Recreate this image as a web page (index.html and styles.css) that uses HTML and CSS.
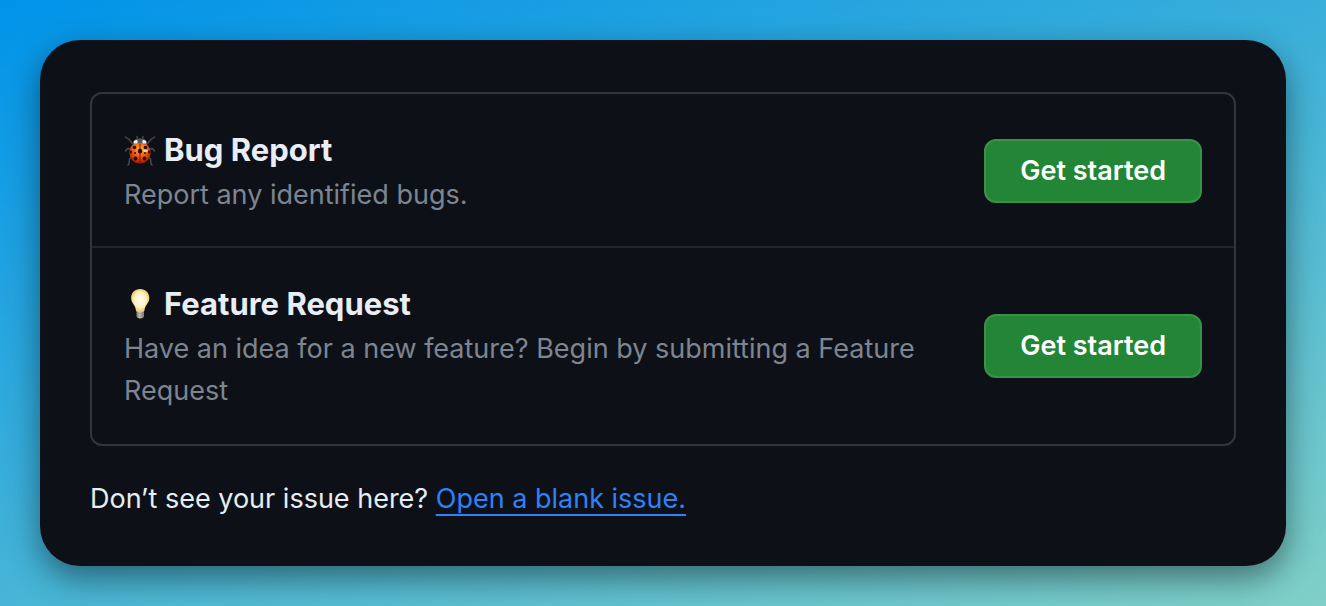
FILE: index.html
```html
<!DOCTYPE html>
<html lang="en">
<head>
<meta charset="utf-8">
<meta name="viewport" content="width=device-width, initial-scale=1">
<title>New issue</title>
<link rel="stylesheet" href="styles.css">
</head>
<body>
<main class="panel">
  <ul class="templates">
    <li class="template">
      <div class="template-text">
        <h2 class="template-title">
          <svg class="icon" viewBox="0 0 32 32" aria-hidden="true">
            <defs>
              <radialGradient id="shell" cx=".5" cy=".3" r=".7">
                <stop offset="0" stop-color="#ffb83c"/>
                <stop offset=".5" stop-color="#f25a14"/>
                <stop offset="1" stop-color="#a81204"/>
              </radialGradient>
            </defs>
            <g fill="none" stroke="#47484c" stroke-width="1.5" stroke-linejoin="round" stroke-linecap="round">
              <path d="M8 9 5 5.500 1.500 3M24 9l3-3.500L30.500 3M6.500 15l-3-.500L1.500 17M25.500 15l3-.500 2 2.500M7.500 23l-2 2-.500 4.500L4 31M24.500 23l2 2 .500 4.500 1 1.500M13.500 5l-.500-2.500M18.500 5l.500-2.500"/>
            </g>
            <path d="M8.500 11C8 6.500 12 4.500 16 4.500s8 2 7.500 6.500z" fill="#55595d"/>
            <path d="M16 9.500c6-1.500 10.500 3 10.500 9S22 29.500 16 29.500 5.500 25 5.500 18.500 10 8 16 9.500z" fill="url(#shell)"/>
            <path d="M10 9.500c-.800-2 .500-3.500 2.500-3.500 1.500.500 1.500 2.500.500 3.500zM22 9.500c.800-2-.500-3.500-2.500-3.500-1.500.500-1.500 2.500-.500 3.500z" fill="#f0f4f4"/>
            <path d="M16 10v19" stroke="#7b1604" stroke-width="1"/>
            <g fill="#251009">
              <ellipse cx="16" cy="17" rx="2.200" ry="2.600"/>
              <circle cx="10.500" cy="13.500" r="1.800"/>
              <circle cx="21.500" cy="13.500" r="1.800"/>
              <circle cx="11" cy="19" r="1"/>
              <circle cx="21" cy="19" r="1"/>
              <ellipse cx="7" cy="18" rx="1" ry="1.800"/>
              <ellipse cx="25" cy="18" rx="1" ry="1.800"/>
              <ellipse cx="11.500" cy="24.500" rx="1.800" ry="2"/>
              <ellipse cx="20.500" cy="24.500" rx="1.800" ry="2"/>
            </g>
            <ellipse cx="21.500" cy="16.800" rx="2.500" ry="1.400" fill="#fff0bd" opacity=".75"/>
          </svg>
          <span>Bug Report</span>
        </h2>
        <p class="template-desc">Report any identified bugs.</p>
      </div>
      <button class="start" type="button">Get started</button>
    </li>
    <li class="template">
      <div class="template-text">
        <h2 class="template-title">
          <svg class="icon" viewBox="0 0 32 32" aria-hidden="true">
            <defs>
              <radialGradient id="glass" cx=".5" cy=".48" r=".52">
                <stop offset="0" stop-color="#fffdf2"/>
                <stop offset=".6" stop-color="#fff3c6"/>
                <stop offset="1" stop-color="#eec860"/>
              </radialGradient>
              <linearGradient id="cap">
                <stop offset="0" stop-color="#77736d"/>
                <stop offset=".4" stop-color="#c9c6c0"/>
                <stop offset="1" stop-color="#77736d"/>
              </linearGradient>
            </defs>
            <path d="M12.500 23h7.500v5c0 1.500-1.500 2.500-3.700 2.500s-3.800-1-3.800-2.500z" fill="url(#cap)"/>
            <path d="M12.500 25.500h7.500M12.500 28h7.500" stroke="#8e8b85" stroke-width=".7"/>
            <path d="M16.200 1C21.500 1 25.300 4.800 25.300 10c0 3.200-1.600 5.200-3.200 7.500-1.300 2-1.300 3.500-1.800 5.500-.400 1.300-7.800 1.300-8.200 0-.500-2-.500-3.500-1.800-5.500C8.700 15.200 7.100 13.200 7.100 10c0-5.200 3.800-9 9.100-9z" fill="url(#glass)"/>
          </svg>
          <span>Feature Request</span>
        </h2>
        <p class="template-desc">Have an idea for a new feature? Begin by submitting a Feature Request</p>
      </div>
      <button class="start" type="button">Get started</button>
    </li>
  </ul>
  <p class="blank">Don’t see your issue here? <a class="blank-link" href="#">Open a blank issue.</a></p>
</main>
</body>
</html>
```
FILE: styles.css
```css
* {
  box-sizing: border-box;
}

body {
  margin: 0;
  min-height: 100vh;
  padding: 40px;
  background: linear-gradient(160deg, #0093e9 0%, #80d0c7 100%);
  color: #e6edf3;
  font-family: Inter, "Liberation Sans", sans-serif;
  font-size: 27px;
  line-height: 42px;
}

.panel {
  padding: 52px 50px 46px;
  border-radius: 40px;
  background: #0d1117;
  box-shadow: 0 12px 32px rgba(0, 0, 0, 0.45);
}

.templates {
  margin: 0;
  padding: 0;
  list-style: none;
  border: 2px solid #30363d;
  border-radius: 12px;
}

.template {
  display: flex;
  align-items: center;
  gap: 32px;
  padding: 32px;
}

.template:not(:last-child) {
  padding-bottom: 30px;
  border-bottom: 2px solid #21262d;
}

.template-text {
  flex: 1;
}

.template-title {
  display: flex;
  align-items: center;
  gap: 8px;
  margin: 0;
  color: #e8edf6;
  font-size: 31px;
  font-weight: 700;
  line-height: 48px;
}

.icon {
  width: 32px;
  height: 32px;
}

.template-desc {
  margin: 0;
  color: #7d8590;
}

.start {
  height: 64px;
  padding: 0 34px;
  border: 2px solid #3a9249;
  border-radius: 12px;
  background: #238636;
  color: #fff;
  font: inherit;
  font-weight: 600;
  white-space: nowrap;
}

.blank {
  margin: 32px 0 0;
}

.blank-link {
  color: #2f81f7;
  text-decoration: underline;
  text-decoration-thickness: 2px;
  text-underline-offset: 6px;
  text-decoration-skip-ink: none;
}
```
